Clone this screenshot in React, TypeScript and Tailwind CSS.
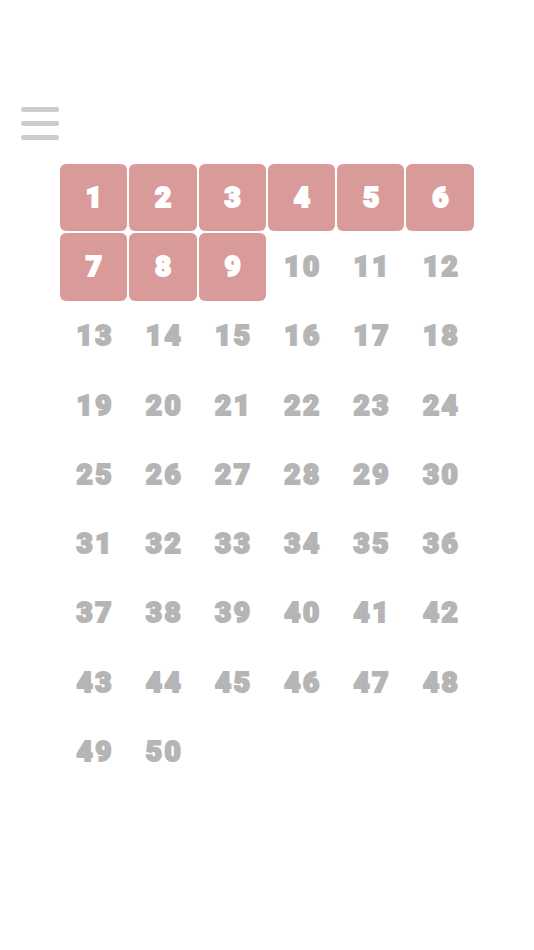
import React from "react";

export default function App() {
  const nums = Array.from({ length: 50 }, (_, i) => i + 1);
  return (
    <div className="w-[534px] h-[950px] bg-white" style={{ fontFamily: "Roboto, 'DejaVu Sans', sans-serif" }}>
      <div className="pt-[107px] pl-[21px]">
        <div className="flex flex-col gap-[9px] w-[38px]">
          <div className="h-[5px] rounded-full bg-[#cccccc]" />
          <div className="h-[5px] rounded-full bg-[#cccccc]" />
          <div className="h-[5px] rounded-full bg-[#cccccc]" />
        </div>
      </div>
      <div className="mt-[24px] ml-[60px] grid grid-cols-[repeat(6,67.3px)] auto-rows-[67.3px] gap-[2px]">
        {nums.map((n) => (
          <div
            key={n}
            className={
              n <= 9
                ? "flex items-center justify-center pl-[3px] rounded-[6px] bg-[#d99a9a] text-white text-[28px] font-black tracking-[2.5px] [-webkit-text-stroke:2px_currentColor]"
                : "flex items-center justify-center pl-[3px] text-[#b5b5b5] text-[28px] font-black tracking-[2.5px] [-webkit-text-stroke:2px_currentColor]"
            }
          >
            {n}
          </div>
        ))}
      </div>
    </div>
  );
}
